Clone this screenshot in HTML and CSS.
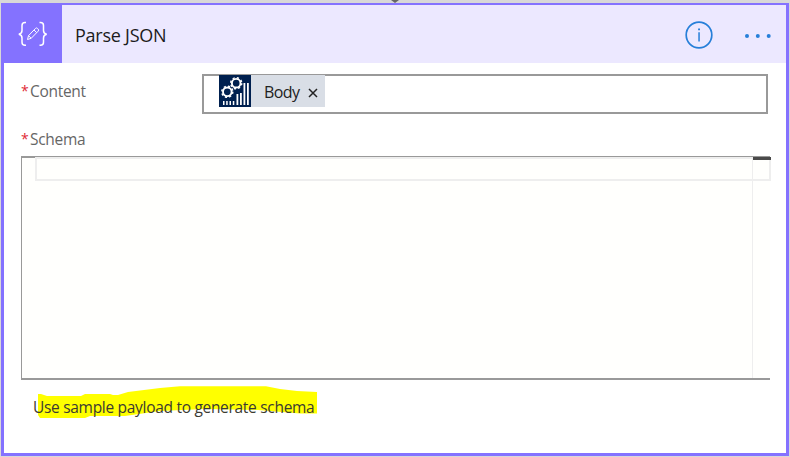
FILE: index.html
```html
<!DOCTYPE html>
<html lang="en">
<head>
<meta charset="utf-8">
<title>Parse JSON</title>
<link rel="stylesheet" href="styles.css">
</head>
<body>
<svg class="connector" viewBox="0 0 8 3"><path d="M0 0h8L4 3z"/></svg>
<main class="card">
  <header class="header">
    <div class="tile">
      <svg width="60" height="60" viewBox="0 0 60 60" fill="none" stroke="#fff">
        <path stroke-width="1.5" d="M25 19.500h-1c-2 0-3 1-3 3v5c0 2-.8 3.200-3.200 3.700 2.400.5 3.200 1.700 3.200 3.700v4.400c0 2 1 3 3 3h1M38.500 19.500h1c2 0 3 1 3 3v5c0 2 .8 3.200 3.200 3.700-2.400.5-3.200 1.700-3.200 3.700v4.400c0 2-1 3-3 3h-1"/>
        <path stroke-width="1" d="m26.500 36.500 1-3.800 7-7.300q1-1 2 0l.7.7q1 1 0 2l-7 7.200zM33 27l2.700 2.700M27.500 32.700l2.700 2.600"/>
      </svg>
    </div>
    <h1 class="title">Parse JSON</h1>
    <svg class="info" width="28" height="28" viewBox="0 0 28 28"><circle cx="14" cy="14" r="12.800" fill="none" stroke="#267fd9" stroke-width="1.700"/><path fill="#267fd9" d="M13.300 11.200h1.500v9.300h-1.500zM13.100 7.500h1.900v1.800h-1.900z"/></svg>
    <svg class="more" width="28" height="6" viewBox="0 0 28 6" fill="#267fd9"><circle cx="3" cy="3" r="2"/><circle cx="13.800" cy="3" r="2"/><circle cx="24.700" cy="3" r="2"/></svg>
  </header>
  <section class="body">
    <div class="row">
      <label class="label"><span class="star">*</span><span class="name">Content</span></label>
      <div class="input">
        <div class="token">
          <svg width="32" height="32" viewBox="0 0 32 32">
            <path fill="#00204f" d="M0 0h32v32H0z"/>
            <g fill="none" stroke="#fff"><circle cx="8.300" cy="16.800" r="4.300" stroke-width="1.900"/><circle cx="8.300" cy="16.800" r="5.500" stroke-width="1.500" stroke-dasharray="2.160 2.160"/><circle cx="17.200" cy="8.200" r="4.300" stroke-width="1.900"/><circle cx="17.200" cy="8.200" r="5.500" stroke-width="1.500" stroke-dasharray="2.160 2.160"/></g>
            <path fill="#fff" d="M4 26h1.500v4H4zM7.200 26h1.500v4H7.200zM10.500 26H12v4h-1.500zM13.800 26h1.500v4h-1.500zM17.500 19h1.800v11h-1.800zM21 18h1.800v12H21zM24.500 8h1.800v22h-1.800zM28 8h1.800v22H28z"/>
          </svg>
          <span class="token-name">Body</span>
          <svg class="close" width="10" height="10" viewBox="0 0 10 10"><path d="m1 1 8 8M9 1 1 9" stroke="#222" stroke-width="1.500"/></svg>
        </div>
      </div>
    </div>
    <label class="label schema-label"><span class="star">*</span><span class="name">Schema</span></label>
    <div class="editor">
      <div class="line"></div>
      <div class="ruler"></div>
    </div>
    <div class="sample">
      <svg class="marker" width="286" height="34" viewBox="0 0 286 34"><path fill="#ff0" d="M5 7h3l6 2h34l4-2h25l3 1h5l10-3 32-4 20-1.700h86L247 2l17 2 20 1v21.500h-17L225 23l-53-1-45 2-35 5H57l-5 2H7l-2-3z"/></svg>
      <span class="link">Use sample payload to generate schema</span>
    </div>
  </section>
</main>
</body>
</html>
```
FILE: styles.css
```css
* { box-sizing: border-box; }
body {
  margin: 0;
  height: 457px;
  padding: 3px 1px 1px;
  background: #d8d8d8;
  font-family: "Open Sans", "Noto Sans", sans-serif;
  overflow: hidden;
}
.connector { position: absolute; left: 391px; top: 0; width: 8px; height: 3px; fill: #666; }
.card { height: 453px; background: #fff; border: 3px solid #8472ff; border-top-width: 2px; }
.header { height: 58px; display: flex; align-items: center; background: #ece8ff; }
.tile { width: 61px; height: 60px; margin: -2px 0 0 -3px; background: #8472ff; }
.tile svg { display: block; }
.title { margin: 1px 0 0 13px; font-size: 18px; font-weight: 400; line-height: 26px; letter-spacing: -.25px; color: #1b1b20; white-space: nowrap; }
.info { margin: 1px 0 0 auto; }
.more { margin: 3px 14px 0 31px; }
.body { padding: 11px 16px 0 17px; }
.row { display: flex; height: 40px; }
.label { display: flex; width: 181px; color: #666; font-size: 15.5px; line-height: 22px; }
.row .label { padding-top: 6px; }
.star { width: 9px; color: #e02b35; font-size: 14px; }
.name { white-space: nowrap; letter-spacing: -.3px; }
.input { width: 566px; border: 2px solid #999; padding-left: 15px; }
.token { display: flex; align-items: center; width: 106px; height: 32px; margin-top: -1px; background: #d9dee6; }
.token-name { margin: 2px 0 0 13px; width: 44px; font-size: 16px; line-height: 22px; color: #222; letter-spacing: -.6px; }
.close { margin-top: 4px; }
.schema-label { margin-top: 14px; }
.editor { display: flex; justify-content: flex-end; position: relative; width: 749px; height: 224px; margin-top: 6px; background: #fffffd; border: solid #999; border-width: 2px 0 2px 1px; }
.line { position: absolute; left: 13px; top: -1px; width: 736px; height: 24px; border: 2px solid #eee; }
.ruler { width: 18px; border-left: 1px solid #eee; position: relative; }
.ruler::before { content: ""; position: absolute; left: 0; right: -1px; top: -1px; height: 3px; background: #4a4a4a; }
.sample { position: relative; margin: 7px 0 0 12px; width: 286px; height: 40px; padding-top: 9px; }
.marker { position: absolute; left: 0; top: 0; overflow: visible; }
.link { position: relative; font-size: 15.5px; line-height: 22px; letter-spacing: -.3px; color: #3b3a32; white-space: nowrap; }
```
